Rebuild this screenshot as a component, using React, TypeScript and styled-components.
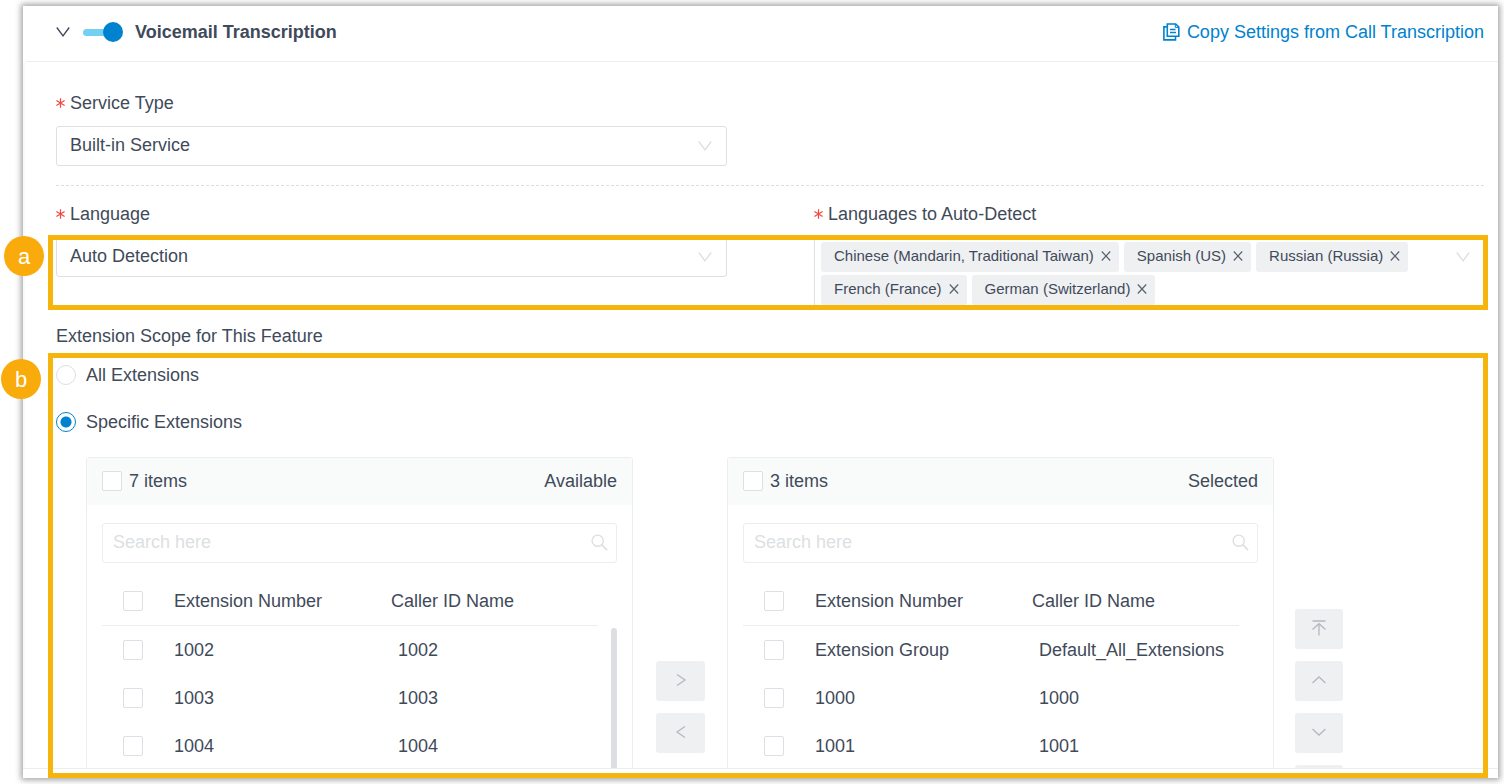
import React from "react";
import styled, { createGlobalStyle } from "styled-components";

const ink = "#3f4a5a";
const blue = "#0082ce";
const line = "#dcdfe3";
const softLine = "#ecedef";
const amber = "#f5b50c";

const Global = createGlobalStyle`
  *, *::before, *::after { box-sizing: border-box; }
  body {
    margin: 0;
    background: #fff;
    color: ${ink};
    font: 18px/24px "Liberation Sans", Arial, sans-serif;
  }
  button, input, select { font: inherit; color: inherit; margin: 0; }
`;

const Page = styled.div`
  height: 100vh;
  padding: 6px 6px 6px 23px;
`;

const Card = styled.main`
  position: relative;
  display: flex;
  flex-direction: column;
  height: 100%;
  background: #fff;
  box-shadow: 0 0 6px 2px rgba(0, 0, 0, 0.36);
`;

const Header = styled.header`
  display: flex;
  align-items: center;
  flex: none;
  height: 56px;
  margin-left: 3px;
  padding: 0 14px 3px 30px;
  border-bottom: 1px solid ${softLine};
`;

const IconButton = styled.button`
  display: flex;
  padding: 0;
  border: 0;
  background: none;
  cursor: pointer;
`;

const Switch = styled.input`
  appearance: none;
  display: flex;
  align-items: center;
  width: 40px;
  height: 20px;
  margin: 0 12px 0 13px;
  cursor: pointer;
  &::before {
    content: "";
    flex: 1;
    height: 7px;
    margin-right: -2px;
    border-radius: 4px 0 0 4px;
    background: #73d0f3;
  }
  &::after {
    content: "";
    width: 20px;
    height: 20px;
    border-radius: 50%;
    background: ${blue};
  }
`;

const Title = styled.h1`
  flex: 1;
  margin: 0;
  font-size: 18px;
  line-height: 24px;
`;

const CopyLink = styled.a`
  display: flex;
  align-items: center;
  gap: 7px;
  color: ${blue};
  text-decoration: none;
`;

const Body = styled.div`
  flex: 1;
  min-height: 0;
  overflow: hidden;
  padding: 29px 13px 0 31px;
  border-left: 2px solid #f9f9f9;
`;

const Footer = styled.footer`
  flex: none;
  height: 10px;
  border-top: 1px solid ${softLine};
`;

const Columns = styled.div`
  display: grid;
  grid-template-columns: 1fr 1fr;
  column-gap: 87px;
  align-items: start;
`;

const Divider = styled.hr`
  height: 1px;
  margin: 19px 0 16px;
  border: 0;
  background: repeating-linear-gradient(90deg, ${line} 0 3px, transparent 3px 5px);
`;

const Label = styled.label`
  display: flex;
  align-items: center;
  gap: 5px;
  margin-bottom: 11px;
`;

const SelectBox = styled.div`
  display: grid;
  align-items: center;
  > * { grid-area: 1 / 1; }
  > svg { justify-self: end; margin-right: 15px; pointer-events: none; }
`;

const Select = styled.select`
  appearance: none;
  width: 100%;
  height: 40px;
  padding: 0 40px 2px 13px;
  border: 1px solid ${line};
  border-radius: 3px;
  background: #fff;
`;

const TagBox = styled.div`
  display: flex;
  align-items: flex-start;
  min-height: 72px;
  padding: 4px 14px 4px 6px;
  border: 1px solid ${line};
  border-radius: 3px;
  > svg { flex: none; margin-top: 10px; }
`;

const Tags = styled.ul`
  display: flex;
  flex: 1;
  flex-wrap: wrap;
  gap: 3px 5px;
  margin: 0;
  padding: 0;
  list-style: none;
`;

const Tag = styled.li`
  display: flex;
  align-items: center;
  gap: 7px;
  height: 30px;
  padding: 0 8px 2px 13px;
  border-radius: 3px;
  background: #eff0f2;
  font-size: 15px;
`;

const Scope = styled.fieldset`
  min-width: 0;
  margin: 14px 0 0;
  padding: 0;
  border: 0;
`;

const Legend = styled.legend`
  padding: 0;
`;

const RadioList = styled.div`
  padding: 3px 0 12px;
`;

const RadioRow = styled.label`
  display: flex;
  align-items: center;
  gap: 10px;
  height: 47px;
`;

const Radio = styled.input`
  appearance: none;
  width: 20px;
  height: 20px;
  border: 1px solid ${line};
  border-radius: 50%;
  background: #fff;
  &:checked {
    border-color: ${blue};
    background: radial-gradient(circle, ${blue} 0 5px, transparent 6px);
  }
`;

const Transfer = styled.div`
  display: grid;
  grid-template-columns: minmax(0, 1fr) 52px minmax(0, 1fr) 48px;
  column-gap: 21px;
  align-items: center;
  height: 500px;
  margin: 0 142px 0 30px;
`;

const Panel = styled.section`
  height: 100%;
  border: 1px solid ${softLine};
  border-radius: 3px;
`;

const PanelHead = styled.header`
  display: flex;
  align-items: center;
  justify-content: space-between;
  height: 47px;
  padding: 0 15px 2px;
  background: #f9fbfa;
`;

const CountLabel = styled.label`
  display: flex;
  align-items: center;
  gap: 7px;
`;

const Check = styled.input`
  appearance: none;
  width: 20px;
  height: 20px;
  border: 1px solid ${line};
  border-radius: 2px;
  background: #fff;
`;

const Search = styled.div`
  display: flex;
  align-items: center;
  height: 40px;
  margin: 18px 15px 14px;
  padding: 0 8px 2px 10px;
  border: 1px solid ${softLine};
  border-radius: 3px;
`;

const SearchInput = styled.input`
  flex: 1;
  min-width: 0;
  padding: 0;
  border: 0;
  outline: 0;
  background: none;
  &::placeholder { color: ${line}; opacity: 1; }
`;

const TableArea = styled.div`
  position: relative;
  margin: 0 15px;
`;

const Table = styled.table`
  display: block;
`;

const HeadGroup = styled.thead`
  display: block;
  padding-right: 19px;
`;

const Group = styled.tbody`
  display: block;
  padding-right: 5px;
`;

const Row = styled.tr<{ $head?: boolean }>`
  display: grid;
  grid-template-columns: 62px 1fr 1fr;
  align-items: center;
  height: ${(p) => (p.$head ? "49px" : "48px")};
  ${(p) => p.$head && `border-bottom: 1px solid ${softLine};`}
`;

const Cell = styled.td`
  display: block;
  padding: 0 0 0 10px;
  font-weight: 400;
  text-align: left;
  white-space: nowrap;
`;

const CheckCell = styled(Cell)`
  display: flex;
  justify-content: center;
  padding: 0;
`;

const Thumb = styled.span`
  position: absolute;
  top: 51px;
  right: 0;
  width: 6px;
  height: 180px;
  border-radius: 3px;
  background: #dcdee2;
`;

const ButtonStack = styled.div<{ $inset?: boolean }>`
  display: flex;
  flex-direction: column;
  gap: 12px;
  padding: ${(p) => (p.$inset ? "0 1px 0 2px" : "0")};
`;

const StackButton = styled.button`
  display: flex;
  align-items: center;
  justify-content: center;
  height: 40px;
  padding: 0 0 2px;
  border: 0;
  border-radius: 3px;
  background: #eff0f2;
  color: #b4b8bf;
`;

const Frame = styled.div<{ $top: number; $height?: number }>`
  position: absolute;
  top: ${(p) => p.$top}px;
  left: 25px;
  right: 10px;
  ${(p) => (p.$height ? `height: ${p.$height}px;` : "bottom: 0;")}
  border: 5px solid ${amber};
  pointer-events: none;
`;

const Badge = styled.span<{ $top: number; $left: number }>`
  position: absolute;
  top: ${(p) => p.$top}px;
  left: ${(p) => p.$left}px;
  width: 40px;
  height: 40px;
  border-radius: 50%;
  background: #faab0c;
  color: #fff;
  font-size: 22px;
  line-height: 41px;
  text-align: center;
`;

const Chevron = ({ color = line }: { color?: string }) => (
  <svg width="14" height="10" viewBox="0 0 14 10" fill="none" stroke={color} strokeWidth="1.4">
    <path d="M.8.5 7 8.800 13.200.5" />
  </svg>
);

const Asterisk = () => (
  <svg width="9" height="10" viewBox="0 0 9 10" stroke="#f0483e" strokeWidth="1.2" aria-hidden="true">
    <path d="M4.5.3v9.400M.4 2.600l8.200 4.800M8.600 2.600.4 7.400" />
  </svg>
);

const CopyIcon = () => (
  <svg width="17" height="18" viewBox="0 0 17 18" fill="none" stroke={blue} strokeWidth="1.6">
    <path d="M4.300 1h8.400l3.100 3v9.200H4.300z" />
    <path d="M12.300 1v3.400h3.500" strokeWidth="1" />
    <path d="M3.800 3.900H.9v13h11.600v-3" />
    <path d="M7 6.500h5.500M7 9.500h6" strokeWidth="1.3" />
  </svg>
);

const CloseIcon = () => (
  <svg width="10" height="10" viewBox="0 0 10 10" stroke="#59636f" strokeWidth="1.2">
    <path d="m.8.5 8.400 9M9.200.5.8 9.500" />
  </svg>
);

const SearchIcon = () => (
  <svg width="17" height="17" viewBox="0 0 17 17" fill="none" stroke={line} strokeWidth="1.4">
    <circle cx="6.7" cy="6.7" r="5.6" />
    <path d="m10.700 10.700 5.400 5.400" strokeWidth="1.7" />
  </svg>
);

const glyphs = {
  right: "M4 2.5 12 8l-8 5.5",
  left: "M12 2.5 4 8l8 5.5",
  top: "M1.5 1h13M8 15.5V4M1.5 9.5 8 3.7l6.5 5.8",
  up: "M1.5 11 8 5l6.5 6",
  down: "M1.5 5 8 11l6.5-6",
  bottom: "M1.5 15h13M8 .5V12M1.5 6.5 8 12.3l6.5-5.8",
};

const Glyph = ({ name }: { name: keyof typeof glyphs }) => (
  <svg width="16" height="16" viewBox="0 0 16 16" fill="none" stroke="currentColor" strokeWidth="1.3">
    <path d={glyphs[name]} />
  </svg>
);

const languages = [
  "Chinese (Mandarin, Traditional Taiwan)",
  "Spanish (US)",
  "Russian (Russia)",
  "French (France)",
  "German (Switzerland)",
];

type Entry = [string, string];

const available: Entry[] = [
  ["1002", "1002"],
  ["1003", "1003"],
  ["1004", "1004"],
];

const selected: Entry[] = [
  ["Extension Group", "Default_All_Extensions"],
  ["1000", "1000"],
  ["1001", "1001"],
];

const ListPanel = ({ count, title, rows, scroll }: { count: number; title: string; rows: Entry[]; scroll?: boolean }) => (
  <Panel aria-label={title}>
    <PanelHead>
      <CountLabel>
        <Check type="checkbox" />
        {count} items
      </CountLabel>
      <span>{title}</span>
    </PanelHead>
    <Search>
      <SearchInput type="text" placeholder="Search here" aria-label={`Search ${title}`} />
      <SearchIcon />
    </Search>
    <TableArea>
      <Table>
        <HeadGroup>
          <Row $head>
            <CheckCell as="th">
              <Check type="checkbox" aria-label="Select all" />
            </CheckCell>
            <Cell as="th">Extension Number</Cell>
            <Cell as="th">Caller ID Name</Cell>
          </Row>
        </HeadGroup>
        <Group>
          {rows.map(([number, name]) => (
            <Row key={number}>
              <CheckCell>
                <Check type="checkbox" aria-label={`Select ${number}`} />
              </CheckCell>
              <Cell>{number}</Cell>
              <Cell>{name}</Cell>
            </Row>
          ))}
        </Group>
      </Table>
      {scroll && <Thumb />}
    </TableArea>
  </Panel>
);

export default function App() {
  return (
    <Page>
      <Global />
      <Card>
        <Header>
          <IconButton type="button" aria-label="Collapse section">
            <Chevron color={ink} />
          </IconButton>
          <Switch type="checkbox" role="switch" defaultChecked aria-label="Voicemail Transcription" />
          <Title>Voicemail Transcription</Title>
          <CopyLink href="#copy">
            <CopyIcon />
            Copy Settings from Call Transcription
          </CopyLink>
        </Header>
        <Body>
          <Columns>
            <div>
              <Label htmlFor="service">
                <Asterisk />
                Service Type
              </Label>
              <SelectBox>
                <Select id="service">
                  <option>Built-in Service</option>
                </Select>
                <Chevron />
              </SelectBox>
            </div>
          </Columns>
          <Divider />
          <Columns>
            <div>
              <Label htmlFor="language">
                <Asterisk />
                Language
              </Label>
              <SelectBox>
                <Select id="language">
                  <option>Auto Detection</option>
                </Select>
                <Chevron />
              </SelectBox>
            </div>
            <div>
              <Label as="div" id="detect-label">
                <Asterisk />
                Languages to Auto-Detect
              </Label>
              <TagBox role="group" aria-labelledby="detect-label">
                <Tags>
                  {languages.map((name) => (
                    <Tag key={name}>
                      {name}
                      <IconButton type="button" aria-label={`Remove ${name}`}>
                        <CloseIcon />
                      </IconButton>
                    </Tag>
                  ))}
                </Tags>
                <Chevron />
              </TagBox>
            </div>
          </Columns>
          <Scope>
            <Legend>Extension Scope for This Feature</Legend>
            <RadioList>
              <RadioRow>
                <Radio type="radio" name="scope" />
                All Extensions
              </RadioRow>
              <RadioRow>
                <Radio type="radio" name="scope" defaultChecked />
                Specific Extensions
              </RadioRow>
            </RadioList>
            <Transfer>
              <ListPanel count={7} title="Available" rows={available} scroll />
              <ButtonStack $inset>
                <StackButton type="button" aria-label="Add to selected">
                  <Glyph name="right" />
                </StackButton>
                <StackButton type="button" aria-label="Remove from selected">
                  <Glyph name="left" />
                </StackButton>
              </ButtonStack>
              <ListPanel count={3} title="Selected" rows={selected} />
              <ButtonStack>
                <StackButton type="button" aria-label="Move to top">
                  <Glyph name="top" />
                </StackButton>
                <StackButton type="button" aria-label="Move up">
                  <Glyph name="up" />
                </StackButton>
                <StackButton type="button" aria-label="Move down">
                  <Glyph name="down" />
                </StackButton>
                <StackButton type="button" aria-label="Move to bottom">
                  <Glyph name="bottom" />
                </StackButton>
              </ButtonStack>
            </Transfer>
          </Scope>
        </Body>
        <Footer />
        <Frame $top={229} $height={75} />
        <Frame $top={347} />
        <Badge $top={230} $left={-19}>a</Badge>
        <Badge $top={353} $left={-22}>b</Badge>
      </Card>
    </Page>
  );
}
